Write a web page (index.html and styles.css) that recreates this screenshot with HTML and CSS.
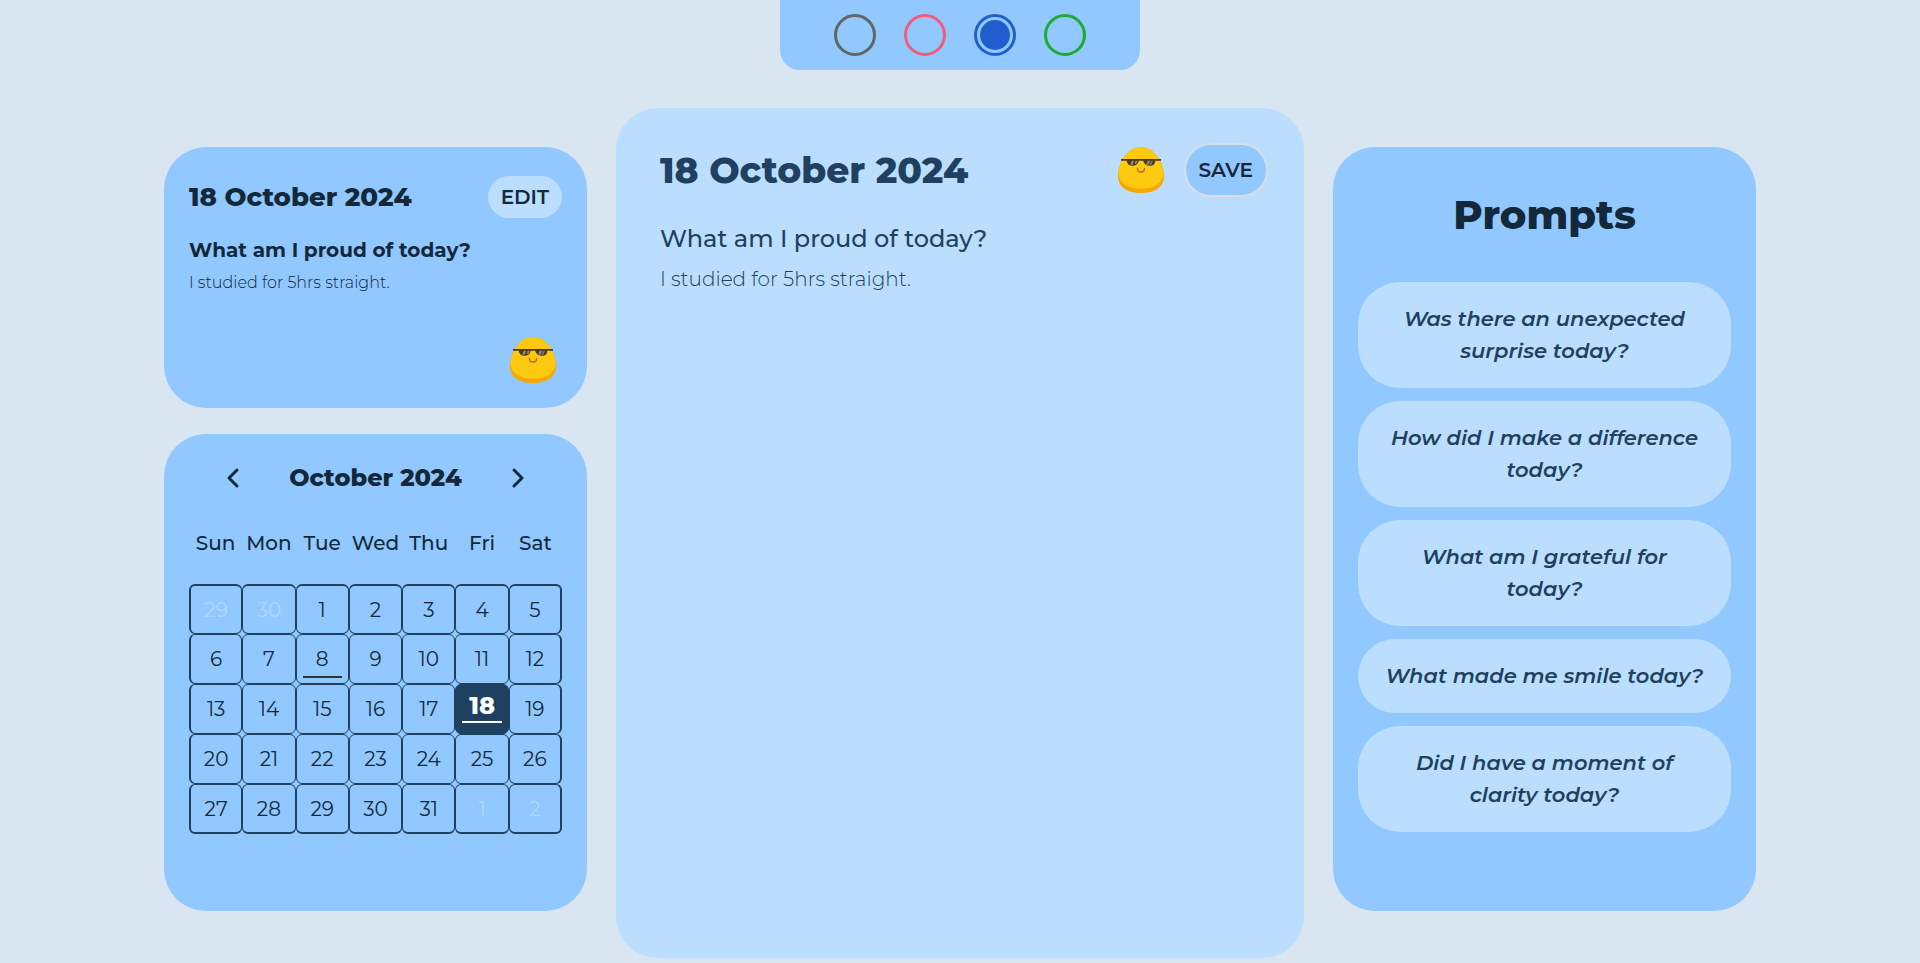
FILE: index.html
```html
<!DOCTYPE html>
<html lang="en">
<head>
<meta charset="utf-8">
<meta name="viewport" content="width=device-width, initial-scale=1">
<title>Journal</title>
<link rel="stylesheet" href="styles.css">
</head>
<body>
<svg class="defs" aria-hidden="true">
  <symbol id="cool" viewBox="0 0 137 137">
    <path fill="#f9a602" d="M68 137C26 137 0 119 0 87C0 44 30 0 68 0C107 0 137 44 137 87C137 119 111 137 68 137Z"/>
    <path fill="#ffc90f" d="M68 125C30 125 5 110 1 80C4 40 32 0 68 0C105 0 133 40 136 80C132 110 107 125 68 125Z"/>
    <path fill="#493b26" d="M9 36H128V41H111C111 50 105 56 96 56C84 56 77 50 75 41H62C60 50 53 56 43 56C33 56 27 50 26 41H9Z"/>
    <path fill="#93866a" d="M41 41H48L44 53H36ZM52 41H59L54 51H50ZM88 41H97L91 53H84ZM100 41H104L98 54H94Z"/>
    <path fill="none" stroke="#b5631c" stroke-width="4" stroke-linecap="round" d="M58 64C58 78 79 78 79 64"/>
  </symbol>
</svg>

<div class="themes" role="radiogroup" aria-label="Colour theme">
  <input class="theme theme-grey" type="radio" name="theme" aria-label="Grey">
  <input class="theme theme-pink" type="radio" name="theme" aria-label="Pink">
  <input class="theme theme-blue" type="radio" name="theme" aria-label="Blue" checked>
  <input class="theme theme-green" type="radio" name="theme" aria-label="Green">
</div>

<div class="layout">
  <div class="side">
    <section class="card entry">
      <header class="row">
        <h2 class="entry-date">18 October 2024</h2>
        <button class="pill" type="button">EDIT</button>
      </header>
      <h3 class="entry-question">What am I proud of today?</h3>
      <p class="entry-text">I studied for 5hrs straight.</p>
      <svg class="mood entry-mood" role="img" aria-label="Cool"><use href="#cool"/></svg>
    </section>

    <section class="card calendar">
      <header class="month">
        <button class="arrow" type="button" aria-label="Previous month"><svg width="14" height="22" viewBox="0 0 14 22"><path d="M11 3L3 11L11 19"/></svg></button>
        <h2 class="month-name">October 2024</h2>
        <button class="arrow" type="button" aria-label="Next month"><svg width="14" height="22" viewBox="0 0 14 22"><path d="M3 3L11 11L3 19"/></svg></button>
      </header>
      <table class="days">
        <thead><tr><th>Sun</th><th>Mon</th><th>Tue</th><th>Wed</th><th>Thu</th><th>Fri</th><th>Sat</th></tr></thead>
        <tbody>
          <tr><td><button class="day other">29</button></td><td><button class="day other">30</button></td><td><button class="day">1</button></td><td><button class="day">2</button></td><td><button class="day">3</button></td><td><button class="day">4</button></td><td><button class="day">5</button></td></tr>
          <tr><td><button class="day">6</button></td><td><button class="day">7</button></td><td><button class="day written">8</button></td><td><button class="day">9</button></td><td><button class="day">10</button></td><td><button class="day">11</button></td><td><button class="day">12</button></td></tr>
          <tr><td><button class="day">13</button></td><td><button class="day">14</button></td><td><button class="day">15</button></td><td><button class="day">16</button></td><td><button class="day">17</button></td><td><button class="day written selected">18</button></td><td><button class="day">19</button></td></tr>
          <tr><td><button class="day">20</button></td><td><button class="day">21</button></td><td><button class="day">22</button></td><td><button class="day">23</button></td><td><button class="day">24</button></td><td><button class="day">25</button></td><td><button class="day">26</button></td></tr>
          <tr><td><button class="day">27</button></td><td><button class="day">28</button></td><td><button class="day">29</button></td><td><button class="day">30</button></td><td><button class="day">31</button></td><td><button class="day other">1</button></td><td><button class="day other">2</button></td></tr>
        </tbody>
      </table>
    </section>
  </div>

  <main class="editor">
    <header class="row">
      <h1 class="editor-date">18 October 2024</h1>
      <div class="actions">
        <svg class="mood" role="img" aria-label="Cool"><use href="#cool"/></svg>
        <button class="pill save" type="button">SAVE</button>
      </div>
    </header>
    <h2 class="editor-question">What am I proud of today?</h2>
    <p class="editor-text">I studied for 5hrs straight.</p>
  </main>

  <aside class="side">
    <section class="card prompts">
      <h2 class="prompts-title">Prompts</h2>
      <button class="prompt" type="button">Was there an unexpected surprise today?</button>
      <button class="prompt" type="button">How did I make a difference today?</button>
      <button class="prompt" type="button">What am I grateful for today?</button>
      <button class="prompt" type="button">What made me smile today?</button>
      <button class="prompt" type="button">Did I have a moment of clarity today?</button>
    </section>
  </aside>
</div>
</body>
</html>
```

FILE: styles.css
```css
:root {
  --page: #d9e5f1;
  --card: #90c8ff;
  --light: #bbdeff;
  --ink: #13283a;
  --navy: #1f4060;
}

* {
  box-sizing: border-box;
}

body {
  display: flex;
  flex-direction: column;
  min-height: 100vh;
  margin: 0;
  background: var(--page);
  color: var(--ink);
  font-family: Montserrat, Inter, "Open Sans", sans-serif;
}

h1, h2, h3, p {
  margin: 0;
}

button {
  border: 0;
  font-family: inherit;
  color: inherit;
  cursor: pointer;
}

.defs {
  display: none;
}

.themes {
  display: flex;
  align-self: center;
  gap: 28px;
  padding: 14px 54px;
  border-radius: 0 0 20px 20px;
  background: var(--card);
}

.theme {
  appearance: none;
  width: 42px;
  height: 42px;
  margin: 0;
  padding: 3px;
  border: 3px solid currentColor;
  border-radius: 50%;
  background-clip: content-box;
}

.theme:checked {
  background-color: currentColor;
}

.theme-grey { color: #646464; }
.theme-pink { color: #f45b78; }
.theme-blue { color: #205ecf; }
.theme-green { color: #1cab2e; }

.layout {
  display: grid;
  flex: 1;
  grid-template-columns: 423fr 688fr 423fr;
  gap: 29px;
  padding: 38px 164px 5px;
}

.side {
  display: flex;
  flex-direction: column;
  gap: 26px;
  padding: 39px 0 47px;
}

.card {
  padding: 24px 25px;
  border-radius: 42px;
  background: var(--card);
}

.row {
  display: flex;
  align-items: center;
  justify-content: space-between;
}

.pill {
  padding: 0 13px;
  border-radius: 27px;
  background: var(--light);
  font-size: 20px;
  font-weight: 600;
  line-height: 42px;
}

.mood {
  display: block;
  width: 46px;
  height: 46px;
}

.entry {
  display: flex;
  flex: 1;
  flex-direction: column;
  padding-top: 29px;
  padding-bottom: 25px;
}

.entry-date {
  font-size: 26px;
  font-weight: 800;
  line-height: 42px;
}

.entry-question {
  margin-top: 18px;
  font-size: 20px;
  font-weight: 700;
  line-height: 28px;
}

.entry-text {
  margin-top: 8px;
  font-size: 16px;
  font-weight: 300;
  line-height: 22px;
}

.entry-mood {
  align-self: flex-end;
  margin: auto 6px 0 0;
}

.calendar {
  padding-bottom: 77px;
}

.month {
  display: flex;
  align-items: center;
  justify-content: space-between;
  padding: 1px 31px 0;
}

.month-name {
  font-size: 24px;
  font-weight: 800;
  line-height: 38px;
}

.arrow {
  display: flex;
  padding: 8px 6px;
  background: none;
}

.arrow path {
  fill: none;
  stroke: currentColor;
  stroke-width: 3;
  stroke-linecap: round;
  stroke-linejoin: round;
}

.days {
  width: 100%;
  border-spacing: 0;
  table-layout: fixed;
}

.days th {
  height: 87px;
  padding: 4px 0 0;
  font-size: 20px;
  font-weight: 500;
}

.days td {
  height: 50px;
  padding: 0;
}

.day {
  display: block;
  position: relative;
  width: 100%;
  height: 50px;
  padding: 0;
  border: 1px solid var(--navy);
  border-radius: 6px;
  background: none;
  font-size: 20px;
  font-weight: 400;
}

/* Inner lines are two touching borders; the table's edge has only one. */
.days tbody tr:first-child .day { border-top-width: 2px; }
.days tbody tr:last-child .day { border-bottom-width: 2px; }
.days td:first-child .day { border-left-width: 2px; }
.days td:last-child .day { border-right-width: 2px; }

.other {
  color: #b0d8ff;
}

.written::after {
  content: "";
  position: absolute;
  right: 6px;
  bottom: 5px;
  left: 6px;
  height: 2px;
  background: #333;
}

.selected {
  padding-bottom: 8px;
  background: var(--navy);
  color: #fff;
  font-size: 24px;
  font-weight: 800;
}

.selected::after {
  bottom: 10px;
  background: #fff;
}

.editor {
  padding: 35px 36px 35px 44px;
  border-radius: 42px;
  background: var(--light);
  color: var(--navy);
}

.editor-date {
  font-size: 36px;
  font-weight: 800;
  line-height: 54px;
}

.actions {
  display: flex;
  align-items: center;
  gap: 20px;
}

.save {
  border: 2px solid #dcdce4;
  background: var(--card);
  color: var(--ink);
  line-height: 50px;
}

.editor-question {
  margin-top: 26px;
  font-size: 24px;
  font-weight: 500;
  line-height: 32px;
}

.editor-text {
  margin-top: 11px;
  font-size: 20px;
  font-weight: 300;
  line-height: 26px;
}

.prompts {
  display: flex;
  flex: 1;
  flex-direction: column;
  gap: 13px;
}

.prompts-title {
  margin-bottom: 10px;
  font-size: 40px;
  font-weight: 800;
  line-height: 88px;
  text-align: center;
}

.prompt {
  padding: 21px 24px;
  border-radius: 42px;
  background: var(--light);
  color: var(--navy);
  font-size: 21px;
  font-style: italic;
  font-weight: 600;
  line-height: 32px;
}
```
